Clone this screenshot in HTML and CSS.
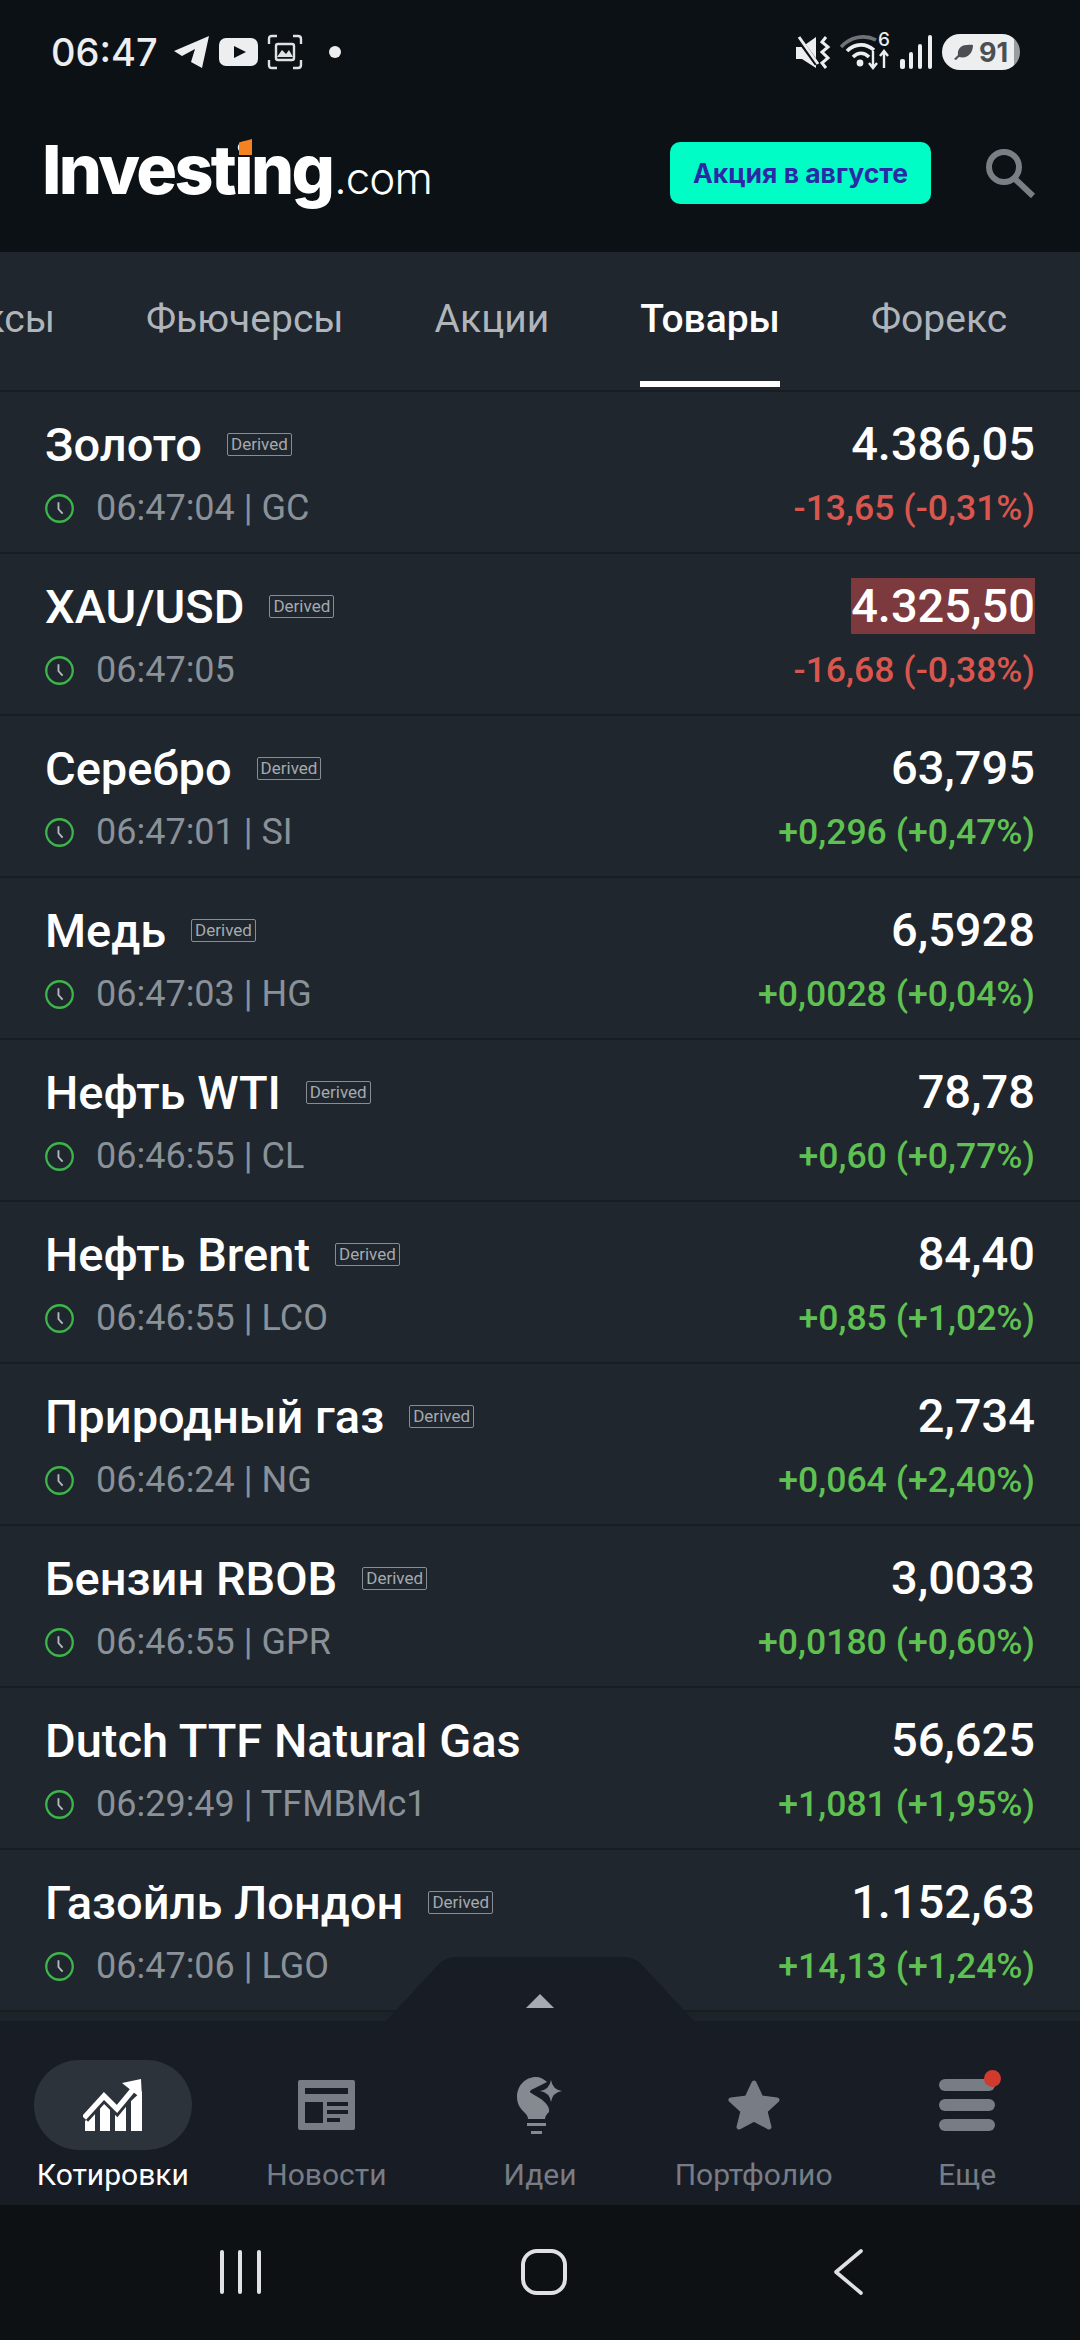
FILE: index.html
```html
<!DOCTYPE html>
<html lang="ru">
<head>
    <meta charset="UTF-8">
    <meta name="viewport" content="width=device-width, initial-scale=1.0">
    <title>Investing.com - Товары</title>
    <link rel="stylesheet" href="styles.css">
</head>
<body>

<svg class="sprite">
    <symbol id="clock" viewBox="0 0 28 28">
        <circle cx="14" cy="14" r="12.8" fill="none" stroke="#3db54a" stroke-width="2.2"/>
        <path d="M13 8V14.500L17 19" fill="none" stroke="#b4bac0" stroke-width="1.800"/>
    </symbol>
</svg>

<div class="app">
    <header class="top">
        <div class="status">
            <span class="clock-text">06:47</span>
            <svg class="st-telegram" width="36" height="34" viewBox="0 0 36 34"><path d="M35 1 28 33 17 27 21 14 8 21 0 16Z" fill="#eceeef"/></svg>
            <svg class="st-yt" width="39" height="28" viewBox="0 0 39 28"><rect width="39" height="28" rx="7" fill="#eceeef"/><path d="M15 8 27 14 15 20Z" fill="#0c1116"/></svg>
            <svg class="st-shot" width="36" height="36" viewBox="0 0 36 36" fill="none" stroke="#dfe1e3" stroke-width="2.4"><path d="M2 10V5Q2 2 5 2H10M26 2H31Q34 2 34 5V10M34 26V31Q34 34 31 34H26M10 34H5Q2 34 2 31V26"/><rect x="9" y="10" width="18" height="16" rx="2"/><path d="M10 23 15 16 19 20 22 16 26 23Z" fill="#dfe1e3" stroke="none"/></svg>
            <i class="st-dot"></i>
            <span class="status-right">
                <svg class="st-mute" width="36" height="33" viewBox="0 0 36 33"><path d="M0 11H6L20 1V32L6 23H0Z" fill="#eceeef"/><path d="M2 2 21 28" stroke="#0c1116" stroke-width="5"/><path d="M3 1 22 28" stroke="#eceeef" stroke-width="3"/><path d="M30 1 26 6 32 11 26 16 32 22 26 27 30 32" fill="none" stroke="#eceeef" stroke-width="3"/></svg>
                <span class="st-wifi">
                    <svg width="50" height="36" viewBox="0 0 50 36" fill="none" stroke-width="3.6"><path d="M1 13C10 3 24 0 36 6" stroke="#6f7377"/><path d="M7 17C15 9 26 9 34 16" stroke="#eceeef"/><path d="M13 23C18 18 24 18 29 23" stroke="#eceeef"/><circle cx="20" cy="29" r="3.4" fill="#eceeef" stroke="none"/><path d="M33 17V34M29 29 33 34 37 29M44 34V17M40 22 44 17 48 22" stroke="#eceeef" stroke-width="2.4"/></svg>
                    <b>6</b>
                </span>
                <svg width="32" height="34" viewBox="0 0 32 34" fill="#eceeef"><rect y="24" width="5" height="10" rx="2"/><rect x="9" y="17" width="4" height="17" rx="2"/><rect x="18" y="9" width="4" height="25" rx="2"/><rect x="28" width="4" height="34" rx="2"/></svg>
                <span class="battery">
                    <svg width="20" height="16" viewBox="0 0 20 16"><path d="M19 1C9 0 3 3 4 11L0 15 2 16 5 13C14 15 19 9 19 1Z" fill="#4b4f53"/></svg>
                    <span>91</span>
                </span>
            </span>
        </div>
        <div class="brand">
            <div class="logo"><span class="logo-main">Investing</span><span class="logo-com">.com</span><i class="logo-mark"></i></div>
            <a class="promo">Акция в августе</a>
            <svg class="search" width="50" height="50" viewBox="0 0 50 50" fill="none" stroke="#7a7f85" stroke-width="6"><circle cx="18" cy="19" r="15"/><path d="M29 31 47 48"/></svg>
        </div>
    </header>

    <nav class="tabs">
        <a class="tab">Индексы</a>
        <a class="tab">Фьючерсы</a>
        <a class="tab">Акции</a>
        <a class="tab active">Товары</a>
        <a class="tab">Форекс</a>
    </nav>

    <main class="list">
        <div class="row">
            <div class="line"><span class="name">Золото</span><span class="derived">Derived</span><span class="price">4.386,05</span></div>
            <div class="line sub"><svg class="clock"><use href="#clock"/></svg><span class="time">06:47:04 | GC</span><span class="chg down">-13,65 (-0,31%)</span></div>
        </div>
        <div class="row">
            <div class="line"><span class="name">XAU/USD</span><span class="derived">Derived</span><span class="price flash">4.325,50</span></div>
            <div class="line sub"><svg class="clock"><use href="#clock"/></svg><span class="time">06:47:05</span><span class="chg down">-16,68 (-0,38%)</span></div>
        </div>
        <div class="row">
            <div class="line"><span class="name">Серебро</span><span class="derived">Derived</span><span class="price">63,795</span></div>
            <div class="line sub"><svg class="clock"><use href="#clock"/></svg><span class="time">06:47:01 | SI</span><span class="chg up">+0,296 (+0,47%)</span></div>
        </div>
        <div class="row">
            <div class="line"><span class="name">Медь</span><span class="derived">Derived</span><span class="price">6,5928</span></div>
            <div class="line sub"><svg class="clock"><use href="#clock"/></svg><span class="time">06:47:03 | HG</span><span class="chg up">+0,0028 (+0,04%)</span></div>
        </div>
        <div class="row">
            <div class="line"><span class="name">Нефть WTI</span><span class="derived">Derived</span><span class="price">78,78</span></div>
            <div class="line sub"><svg class="clock"><use href="#clock"/></svg><span class="time">06:46:55 | CL</span><span class="chg up">+0,60 (+0,77%)</span></div>
        </div>
        <div class="row">
            <div class="line"><span class="name">Нефть Brent</span><span class="derived">Derived</span><span class="price">84,40</span></div>
            <div class="line sub"><svg class="clock"><use href="#clock"/></svg><span class="time">06:46:55 | LCO</span><span class="chg up">+0,85 (+1,02%)</span></div>
        </div>
        <div class="row">
            <div class="line"><span class="name">Природный газ</span><span class="derived">Derived</span><span class="price">2,734</span></div>
            <div class="line sub"><svg class="clock"><use href="#clock"/></svg><span class="time">06:46:24 | NG</span><span class="chg up">+0,064 (+2,40%)</span></div>
        </div>
        <div class="row">
            <div class="line"><span class="name">Бензин RBOB</span><span class="derived">Derived</span><span class="price">3,0033</span></div>
            <div class="line sub"><svg class="clock"><use href="#clock"/></svg><span class="time">06:46:55 | GPR</span><span class="chg up">+0,0180 (+0,60%)</span></div>
        </div>
        <div class="row">
            <div class="line"><span class="name">Dutch TTF Natural Gas</span><span class="price">56,625</span></div>
            <div class="line sub"><svg class="clock"><use href="#clock"/></svg><span class="time">06:29:49 | TFMBMc1</span><span class="chg up">+1,081 (+1,95%)</span></div>
        </div>
        <div class="row">
            <div class="line"><span class="name">Газойль Лондон</span><span class="derived">Derived</span><span class="price">1.152,63</span></div>
            <div class="line sub"><svg class="clock"><use href="#clock"/></svg><span class="time">06:47:06 | LGO</span><span class="chg up">+14,13 (+1,24%)</span></div>
        </div>
        <div class="row-next"></div>

        <svg class="drawer" width="308" height="64" viewBox="0 0 308 64">
            <path d="M0 64 52 8Q59 0 70 0H238Q249 0 256 8L308 64Z" fill="#171c25"/>
            <path d="M140 51 154 37 168 51Z" fill="#a5abb1"/>
        </svg>
    </main>

    <nav class="bottom">
        <a class="item active">
            <span class="ico">
                <svg width="60" height="52" viewBox="0 0 60 52">
                    <g fill="#fff"><path d="M2 42 12 34V52H2Z"/><path d="M17 26 27 20V52H17Z"/><path d="M32 34 43 26V52H32Z"/><path d="M48 22 59 12V52H48Z"/></g>
                    <path d="M1 39 21 17 34 30 53 7" fill="none" stroke="#2d333b" stroke-width="11"/>
                    <path d="M1 39 21 17 34 30 53 7" fill="none" stroke="#fff" stroke-width="5.5"/>
                    <path d="M39 4 58 0 59 20Z" fill="#fff"/>
                </svg>
            </span>
            <span class="lbl">Котировки</span>
        </a>
        <a class="item">
            <span class="ico">
                <svg width="57" height="50" viewBox="0 0 57 50">
                    <rect width="57" height="50" rx="2" fill="#787d85"/>
                    <g fill="#171c25"><rect x="7" y="8" width="43" height="6"/><rect x="7" y="22" width="18" height="21"/><rect x="29" y="22" width="21" height="4"/><rect x="29" y="30" width="21" height="4"/><rect x="29" y="38" width="13" height="4"/></g>
                </svg>
            </span>
            <span class="lbl">Новости</span>
        </a>
        <a class="item">
            <span class="ico">
                <svg width="46" height="57" viewBox="0 0 46 57" fill="#858a91">
                    <path d="M30 5C26 1.500 23 0 19 0 8 0 0 9 0 20 0 28 4 32 8 36 10 38 11 40 11 42H28C28 39 30 37 32 35 33 30 29 26 24 22L14 16Q12 15 14 13Z"/>
                    <rect x="10" y="46" width="19" height="3"/><rect x="14" y="54" width="11" height="3"/>
                    <path d="M34 3Q35.500 12.500 45 14 35.500 15.500 34 25 32.500 15.500 23 14 32.500 12.500 34 3Z"/>
                </svg>
            </span>
            <span class="lbl">Идеи</span>
        </a>
        <a class="item">
            <span class="ico">
                <svg width="52" height="50" viewBox="0 0 52 50"><path d="M26 3 33 18 49 20 37 31 41 47 26 39 11 47 15 31 3 20 19 18Z" fill="#787d85" stroke="#787d85" stroke-width="5" stroke-linejoin="round"/></svg>
            </span>
            <span class="lbl">Портфолио</span>
        </a>
        <a class="item">
            <span class="ico">
                <span class="menu"><i></i><i></i><i></i><b class="badge"></b></span>
            </span>
            <span class="lbl">Еще</span>
        </a>
    </nav>

    <footer class="sysnav">
        <svg class="sys-recent" width="42" height="44" viewBox="0 0 42 44" fill="#dfe1e3"><rect width="4" height="44" rx="2"/><rect x="18" width="4" height="44" rx="2"/><rect x="37" width="4" height="44" rx="2"/></svg>
        <svg class="sys-home" width="46" height="46" viewBox="0 0 46 46"><rect x="2" y="2" width="42" height="42" rx="14" fill="none" stroke="#dfe1e3" stroke-width="4"/></svg>
        <svg class="sys-back" width="30" height="46" viewBox="0 0 30 46"><path d="M28 2 3 23 28 44" fill="none" stroke="#dfe1e3" stroke-width="3.6" stroke-linecap="round" stroke-linejoin="round"/></svg>
    </footer>
</div>

</body>
</html>
```

FILE: styles.css
```css
* {
    box-sizing: border-box;
}

body {
    margin: 0;
    background-color: #0c1116;
    font-family: Roboto, "Noto Sans", sans-serif;
    overflow: hidden;
}

.sprite {
    display: none;
}

.app {
    display: flex;
    flex-direction: column;
    width: 1080px;
    height: 2340px;
}

/* status bar + logo */
.top {
    height: 252px;
    background-color: #0c1116;
}
.status {
    display: flex;
    align-items: center;
    height: 104px;
    padding: 0 60px 0 51px;
    color: #eceeef;
}
.clock-text {
    font-family: Inter, sans-serif;
    font-size: 38px;
    font-weight: 500;
    margin-right: 16px;
}
.st-telegram {
    margin-right: 9px;
}
.st-yt {
    margin-right: 9px;
}
.st-dot {
    width: 12px;
    height: 12px;
    margin-left: 26px;
    border-radius: 50%;
    background-color: #eceeef;
}
.status-right {
    display: flex;
    align-items: center;
    gap: 10px;
    margin-left: auto;
}
.st-mute {
    margin-right: -2px;
    margin-left: -2px;
}
.st-wifi {
    position: relative;
    display: block;
    height: 36px;
}
.st-wifi b {
    position: absolute;
    top: -6px;
    right: 0;
    font-family: Inter, sans-serif;
    font-size: 19px;
    font-weight: 500;
}
.battery {
    display: flex;
    align-items: center;
    justify-content: center;
    gap: 5px;
    width: 78px;
    height: 36px;
    border-radius: 18px;
    background: linear-gradient(to right, #eceeef 92%, #9a9da0 92%);
    color: #4b4f53;
    font-family: Inter, sans-serif;
    font-size: 27px;
    font-weight: 700;
}

.brand {
    display: flex;
    align-items: center;
    height: 138px;
    padding: 0 44px 0 42px;
}
.logo {
    position: relative;
    display: flex;
    align-items: baseline;
    margin-top: -8px;
    color: #fff;
    font-family: Inter, sans-serif;
}
.logo-main {
    font-size: 68px;
    font-weight: 800;
    letter-spacing: -2.6px;
}
.logo-com {
    margin-left: 2px;
    font-size: 44px;
    font-weight: 300;
    letter-spacing: -1px;
}
.logo-mark {
    position: absolute;
    left: 197px;
    top: 11px;
    width: 13px;
    height: 16px;
    background-color: #f58220;
    clip-path: polygon(0 22%, 100% 0, 100% 100%, 0 100%);
}
.promo {
    display: flex;
    align-items: center;
    justify-content: center;
    width: 261px;
    height: 62px;
    margin-left: auto;
    border-radius: 10px;
    background-color: #00fdc6;
    color: #2a2aa6;
    font-family: Inter, sans-serif;
    font-size: 26.5px;
    font-weight: 700;
}
.search {
    margin-left: 55px;
}

/* tabs */
.tabs {
    display: flex;
    gap: 91px;
    height: 140px;
    width: 1191px;
    margin-left: -111px;
    background-color: #1f262d;
    box-shadow: inset 0 -2px 0 #181d22;
}
.tab {
    height: 135px;
    padding-top: 5px;
    border-bottom: 6px solid transparent;
    color: #b0b5bc;
    font-size: 39px;
    line-height: 124px;
    white-space: nowrap;
}
.tab.active {
    border-bottom-color: #fff;
    color: #fff;
    font-weight: 500;
}

/* quote rows */
.list {
    position: relative;
    flex: 1;
    background-color: #1f262d;
}
.row {
    height: 162px;
    padding: 24px 45px 0 45px;
    border-bottom: 2px solid #181d22;
}
.row-next {
    height: 9px;
    background-color: #1c2329;
}
.line {
    display: flex;
    align-items: center;
    height: 56px;
}
.line.sub {
    height: 48px;
    margin-top: 12px;
}
.name {
    color: #fff;
    font-size: 47px;
    font-weight: 500;
    white-space: nowrap;
}
.derived {
    height: 23px;
    margin-left: 25px;
    padding: 0 3px;
    border: 1.5px solid #868d95;
    border-radius: 2px;
    color: #a4aab0;
    font-size: 17px;
    line-height: 20px;
}
.price {
    margin-left: auto;
    color: #fff;
    font-size: 47px;
    font-weight: 500;
    line-height: 56px;
}
.price.flash {
    background-color: #7d3a3e;
}
.clock {
    width: 29px;
    height: 29px;
    margin-right: 22px;
}
.time {
    color: #8a9198;
    font-size: 36px;
}
.chg {
    margin-left: auto;
    font-size: 35.6px;
    font-weight: 500;
}
.chg.down {
    color: #d9564f;
}
.chg.up {
    color: #5fc152;
}
.drawer {
    position: absolute;
    left: 386px;
    bottom: 0;
}

/* bottom tabs */
.bottom {
    display: grid;
    grid-template-columns: repeat(5, 1fr);
    height: 184px;
    padding: 39px 6px 0;
    background-color: #171c25;
}
.item {
    display: flex;
    flex-direction: column;
    align-items: center;
    color: #787d85;
}
.item.active {
    color: #fff;
}
.ico {
    display: flex;
    align-items: center;
    justify-content: center;
    width: 158px;
    height: 90px;
    border-radius: 45px;
}
.item.active .ico {
    background-color: #2d333b;
}
.lbl {
    margin-top: 5px;
    font-size: 30px;
    line-height: 40px;
}
.menu {
    position: relative;
    display: flex;
    flex-direction: column;
    gap: 8px;
    width: 56px;
}
.menu i {
    height: 12px;
    border-radius: 6px;
    background-color: #787d85;
}
.badge {
    position: absolute;
    top: -9px;
    right: -6px;
    width: 17px;
    height: 17px;
    border-radius: 50%;
    background-color: #d13a2c;
}

/* android buttons */
.sysnav {
    display: flex;
    align-items: center;
    height: 135px;
    padding: 0 0 2px 220px;
    background-color: #0d1114;
}
.sys-home {
    margin-left: 259px;
}
.sys-back {
    margin-left: 266px;
}
```
